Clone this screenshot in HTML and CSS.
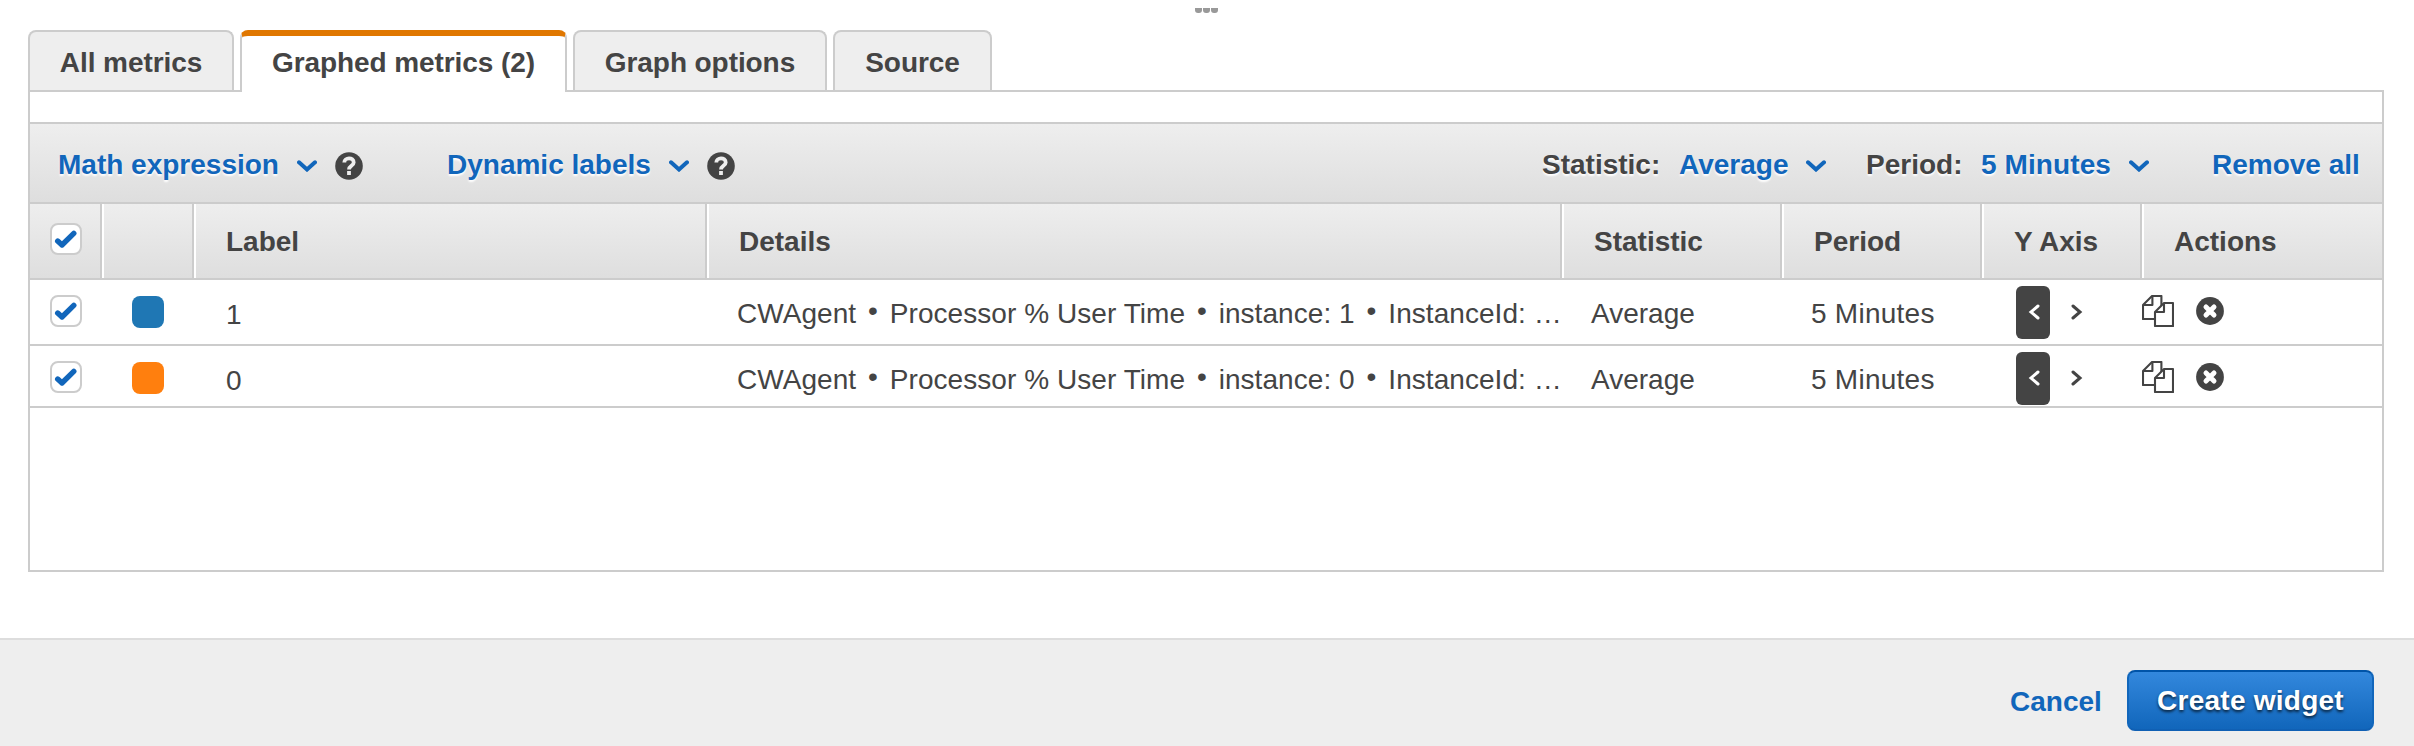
FILE: index.html
```html
<!DOCTYPE html>
<html lang="en">
<head>
<meta charset="utf-8">
<title>Graphed metrics</title>
<link rel="stylesheet" href="styles.css">
</head>
<body>
<svg class="defs" width="0" height="0">
  <symbol id="chevron" viewBox="0 0 20 12"><path d="M2 2.3 L10 9.5 L18 2.3" fill="none" stroke="#1166bb" stroke-width="4" stroke-linecap="round" stroke-linejoin="miter"/></symbol>
  <symbol id="help" viewBox="0 0 28 28"><circle cx="14" cy="14" r="13.8" fill="#444"/><path d="M9.3 10.6 C9.3 4.9 18.7 5 18.7 10.4 C18.7 13.8 14 13.8 14 17.4" fill="none" stroke="#eee" stroke-width="3.8"/><rect x="12.1" y="19" width="3.8" height="4" fill="#eee"/></symbol>
  <symbol id="check" viewBox="0 0 32 32"><path d="M7.7 18 L12 22 L23.8 10.4" fill="none" stroke="#1166bb" stroke-width="5.4" stroke-linecap="round" stroke-linejoin="round"/></symbol>
  <symbol id="copy" viewBox="0 0 32 32"><g fill="#fff" stroke="#444" stroke-width="2.1" stroke-linejoin="round"><path d="M1 10 L10 1 H19.4 V24 H1 Z"/><path d="M1.4 10 H10.4 V1.4" fill="none"/><path d="M13 17 L22 8 H31 V31 H13 Z"/><path d="M13 17 H22 V8" fill="none"/></g></symbol>
  <symbol id="remove" viewBox="0 0 28 28"><circle cx="14" cy="14" r="13.9" fill="#444"/><path d="M10 10 L18 18 M18 10 L10 18" stroke="#fff" stroke-width="5" stroke-linecap="round"/></symbol>
  <symbol id="left" viewBox="0 0 12 16"><path d="M10 2 L3 8 L10 14" fill="none" stroke="#fff" stroke-width="3" stroke-linecap="round"/></symbol>
  <symbol id="right" viewBox="0 0 12 16"><path d="M2 2 L9 8 L2 14" fill="none" stroke="#444" stroke-width="3" stroke-linecap="round"/></symbol>
</svg>
<div class="grip"><i></i><i></i><i></i></div>
<main class="content">
  <nav class="tabs">
    <a class="tab tab-all">All metrics</a>
    <a class="tab tab-graphed active">Graphed metrics (2)</a>
    <a class="tab tab-options">Graph options</a>
    <a class="tab tab-source">Source</a>
  </nav>
  <section class="panel">
    <div class="toolbar">
      <a class="link math">Math expression</a><svg class="chev"><use href="#chevron"/></svg><svg class="help"><use href="#help"/></svg>
      <a class="link dynamic">Dynamic labels</a><svg class="chev"><use href="#chevron"/></svg><svg class="help"><use href="#help"/></svg>
      <span class="key stat">Statistic:</span><a class="link avg">Average</a><svg class="chev"><use href="#chevron"/></svg>
      <span class="key period">Period:</span><a class="link minutes">5 Minutes</a><svg class="chev"><use href="#chevron"/></svg>
      <a class="link remove-all">Remove all</a>
    </div>
    <div class="grid head">
      <div class="cell"><span class="box"><svg><use href="#check"/></svg></span></div>
      <div class="cell"></div>
      <div class="cell">Label</div>
      <div class="cell">Details</div>
      <div class="cell">Statistic</div>
      <div class="cell">Period</div>
      <div class="cell">Y Axis</div>
      <div class="cell">Actions</div>
    </div>
    <div class="grid row">
      <div class="cell"><span class="box"><svg><use href="#check"/></svg></span></div>
      <div class="cell"><span class="swatch blue"></span></div>
      <div class="cell label">1</div>
      <div class="cell details">CWAgent <b>•</b> Processor % User Time <b>•</b> instance: 1 <b>•</b> InstanceId: …</div>
      <div class="cell">Average</div>
      <div class="cell minutes-cell">5 Minutes</div>
      <div class="cell axis"><span class="side"><svg><use href="#left"/></svg></span><svg class="right"><use href="#right"/></svg></div>
      <div class="cell actions"><svg class="copy"><use href="#copy"/></svg><svg class="del"><use href="#remove"/></svg></div>
    </div>
    <div class="grid row last">
      <div class="cell"><span class="box"><svg><use href="#check"/></svg></span></div>
      <div class="cell"><span class="swatch orange"></span></div>
      <div class="cell label">0</div>
      <div class="cell details">CWAgent <b>•</b> Processor % User Time <b>•</b> instance: 0 <b>•</b> InstanceId: …</div>
      <div class="cell">Average</div>
      <div class="cell minutes-cell">5 Minutes</div>
      <div class="cell axis"><span class="side"><svg><use href="#left"/></svg></span><svg class="right"><use href="#right"/></svg></div>
      <div class="cell actions"><svg class="copy"><use href="#copy"/></svg><svg class="del"><use href="#remove"/></svg></div>
    </div>
  </section>
</main>
<footer class="footer">
  <a class="link cancel">Cancel</a>
  <button class="create">Create widget</button>
</footer>
</body>
</html>
```
FILE: styles.css
```css
* { box-sizing: border-box; }
body {
  margin: 0;
  height: 746px;
  overflow: hidden;
  display: flex;
  flex-direction: column;
  background: #fff;
  color: #444;
  font: 28px/32px "Liberation Sans", Arial, sans-serif;
  white-space: nowrap;
}
svg { display: block; flex: none; }
.defs { position: absolute; }
.grip { height: 30px; padding: 8px 0 0 1195px; display: flex; gap: 1px; }
.grip i { width: 7px; height: 5px; background: #999; border-radius: 0 0 3px 3px; }
.content { padding: 0 30px 0 28px; height: 608px; }

.tabs { display: flex; gap: 6px; height: 62px; }
.tab {
  height: 60px;
  padding-top: 15px;
  text-align: center;
  font-weight: bold;
  letter-spacing: -0.08px;
  background: #eee;
  border: 2px solid #ccc;
  border-bottom: 0;
  border-radius: 8px 8px 0 0;
}
.tab-all { width: 206px; }
.tab-graphed { width: 327px; }
.tab-options { width: 254px; }
.tab-source { width: 159px; }
.tab.active {
  z-index: 1;
  height: 62px;
  padding-top: 11px;
  background: #fff;
  border-top: 6px solid #e07700;
}

.panel { height: 482px; margin-top: -2px; border: 2px solid #ccc; padding-top: 30px; }
.toolbar {
  height: 80px;
  display: flex;
  align-items: flex-start;
  padding: 25px 0 0 26px;
  border-top: 2px solid #ccc;
  background: linear-gradient(#eee, #dedede);
  font-weight: bold;
  text-shadow: 0 2px 2px #fff;
}
.link { color: #1166bb; font-weight: bold; }
.chev { width: 20px; height: 12px; margin-top: 11px; }
.help { width: 28px; height: 28px; margin: 3px 0 0 18px; }
.math { width: 241px; padding-left: 2px; }
.dynamic { width: 223px; margin-left: 83px; padding-left: 1px; }
.stat { width: 137px; margin-left: 807px; }
.avg { width: 127px; }
.period { width: 115px; margin-left: 39px; padding-left: 1px; }
.minutes { width: 149px; padding-left: 1px; letter-spacing: 0.1px; }
.remove-all { margin-left: 63px; }

.grid { display: grid; grid-template-columns: 72px 92px 513px 855px 220px 200px 160px 240px; }
.head {
  height: 78px;
  border-top: 2px solid #ccc;
  border-bottom: 2px solid #ccc;
  background: linear-gradient(#eee, #dedede);
  font-weight: bold;
}
.head .cell { border-right: 2px solid #ccc; padding: 22px 0 0 32px; }
.head .cell + .cell { box-shadow: inset 2px 0 #fff; }
.head .cell:first-child { padding: 19px 0 0 20px; }
.head .cell:last-child { border-right: 0; }
.row { height: 66px; border-bottom: 2px solid #ccc; }
.row.last { height: 62px; }
.row .cell { padding: 18px 0 0 29px; }
.row .cell:first-child { padding: 15px 0 0 20px; }
.row .cell:nth-child(2) { padding: 16px 0 0 30px; }
.row .label { padding: 19px 0 0 32px; }
.box { display: block; width: 32px; height: 32px; background: #fff; border: 2px solid #ccc; border-radius: 8px; }
.box svg { width: 32px; height: 32px; margin: -2px; }
.swatch { display: block; width: 32px; height: 32px; border-radius: 8px; }
.blue { background: #1f77b4; }
.orange { background: #ff7f0e; }
.row .details { padding-left: 30px; letter-spacing: 0.06px; }
.details b { font-weight: normal; margin: 0 4px; line-height: 0; vertical-align: 3px; }
.minutes-cell { letter-spacing: 0.25px; }
.row .axis { display: flex; padding: 6px 0 0 34px; }
.side { width: 34px; height: 53px; padding: 18px 0 0 12px; background: #444; border-radius: 6px; }
.axis svg { width: 12px; height: 16px; }
.axis .right { margin: 18px 0 0 21px; }
.row .actions { display: flex; padding: 15px 0 0 0; }
.copy { width: 32px; height: 32px; }
.del { width: 28px; height: 28px; margin: 2px 0 0 22px; }

.footer {
  height: 108px;
  padding: 30px 40px 0 0;
  display: flex;
  justify-content: flex-end;
  border-top: 2px solid #ddd;
  background: #eee;
}
.cancel { width: 118px; padding: 16px 0 0 1px; }
.create {
  width: 247px;
  height: 61px;
  padding: 1px 0 0;
  border: 2px solid #1166bb;
  border-top-color: #0054a8;
  border-bottom-color: #1060b4;
  border-radius: 8px;
  background: linear-gradient(#3388dd, #1166bb);
  color: #fff;
  font: bold 28px/32px "Liberation Sans", Arial, sans-serif;
  letter-spacing: 0.25px;
  text-shadow: 0 2px 3px rgba(0, 0, 0, .7);
}
```
